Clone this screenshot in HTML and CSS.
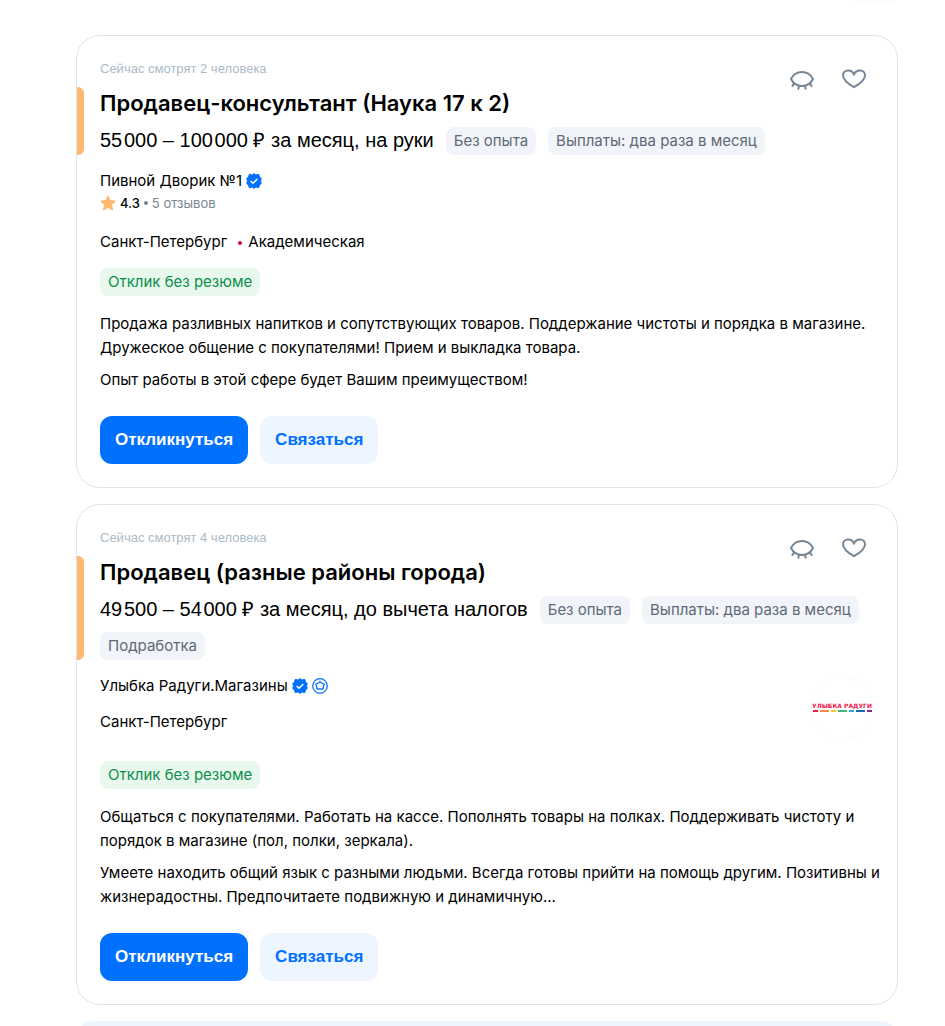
FILE: index.html
```html
<!DOCTYPE html>
<html lang="ru">
<head>
<meta charset="utf-8">
<meta name="viewport" content="width=device-width, initial-scale=1">
<title>Вакансии</title>
<link rel="stylesheet" href="styles.css">
</head>
<body>
<svg class="sprite" aria-hidden="true">
  <symbol id="eye" viewBox="0 0 24 24">
    <path d="M1 12C3.300 7.400 7.300 5 12 5s8.700 2.400 11 7c-2.300 4.600-6.300 7-11 7S3.300 16.600 1 12Z M4 16.500 2 19.700 M9 18.800 8.200 22.500 M15 18.800l.8 3.700 M20 16.500l2 3.200"/>
  </symbol>
  <symbol id="heart" viewBox="0 0 24 24">
    <path d="M12 20.200C6 16.600 1 12.800 1 8.400 1 5.300 3.300 3.500 6 3.500c2.800 0 5.200 1.600 6 4.300.8-2.700 3.200-4.300 6-4.300 2.700 0 5 1.800 5 4.900 0 4.400-5 8.200-11 11.800Z"/>
  </symbol>
  <symbol id="verified" viewBox="0 0 16 16">
    <path fill="#0070ff" stroke="#0070ff" stroke-width="1" stroke-linejoin="round" d="m8 .6 1.900 1.500 2.800-.8.800 2.700 1.800 1.600L14.500 8l.8 2.400-1.800 1.600-.8 2.700-2.800-.8L8 15.400l-1.900-1.500-2.800.8-.8-2.700-1.800-1.600L1.500 8 .7 5.600 2.500 4l.8-2.700 2.800.8Z"/>
    <path fill="none" stroke="#fff" stroke-width="1.500" d="m4.600 8 2.400 2.300 4.300-4.300"/>
  </symbol>
  <symbol id="badge" viewBox="0 0 16 16">
    <g fill="none" stroke="#0070ff"><circle cx="8" cy="8" r="7.300" stroke-width="1.200"/><path stroke-width="1.300" stroke-linejoin="round" d="m8 3.800 1.500 1.300 2.700.9-.8 2.300-.5 2.900-2.900-.3-2.900.3-.5-2.900L3.800 6l2.700-.9Z"/></g>
  </symbol>
  <symbol id="star" viewBox="0 0 16 16">
    <path fill="#ffb870" stroke="#ffb870" stroke-linejoin="round" d="m8 .8 2.100 4.700 5.300.6-3.900 3.600 1.100 5.300L8 12.400 3.400 15l1.100-5.300L.6 6.100l5.300-.6Z"/>
  </symbol>
</svg>
<main class="page">
  <div class="previous"></div>

  <article class="card">
    <header class="head">
      <p class="watching">Сейчас смотрят 2 человека</p>
      <h2 class="title">Продавец-консультант (Наука 17 к 2)</h2>
      <div class="actions">
        <button class="icon-button" aria-label="Скрыть"><svg><use href="#eye"/></svg></button>
        <button class="icon-button" aria-label="В избранное"><svg><use href="#heart"/></svg></button>
      </div>
      <div class="pay">
        <span class="salary">55&#8202;000 – 100&#8202;000 ₽ за месяц, на руки</span>
        <span class="tag">Без опыта</span>
        <span class="tag">Выплаты: два раза в месяц</span>
      </div>
    </header>
    <div class="meta">
      <div class="company"><a href="#">Пивной Дворик №1</a><svg class="mark"><use href="#verified"/></svg></div>
      <div class="rating"><svg class="mark"><use href="#star"/></svg><b>4.3</b><i class="dot"></i><a href="#">5 отзывов</a></div>
      <div class="place rated"><span>Санкт-Петербург</span><i class="dot metro"></i><span>Академическая</span></div>
    </div>
    <span class="tag green">Отклик без резюме</span>
    <div class="text">
      <p>Продажа разливных напитков и сопутствующих товаров. Поддержание чистоты и порядка в магазине. Дружеское общение с покупателями! Прием и выкладка товара.</p>
      <p>Опыт работы в этой сфере будет Вашим преимуществом!</p>
    </div>
    <div class="buttons"><button class="button primary">Откликнуться</button><button class="button">Связаться</button></div>
  </article>

  <article class="card">
    <header class="head">
      <p class="watching">Сейчас смотрят 4 человека</p>
      <h2 class="title">Продавец (разные районы города)</h2>
      <div class="actions">
        <button class="icon-button" aria-label="Скрыть"><svg><use href="#eye"/></svg></button>
        <button class="icon-button" aria-label="В избранное"><svg><use href="#heart"/></svg></button>
      </div>
      <div class="pay">
        <span class="salary">49&#8202;500 – 54&#8202;000 ₽ за месяц, до вычета налогов</span>
        <span class="tag">Без опыта</span>
        <span class="tag">Выплаты: два раза в месяц</span>
        <span class="tag">Подработка</span>
      </div>
    </header>
    <div class="employer">
      <div class="meta">
        <div class="company"><a href="#">Улыбка Радуги.Магазины</a><svg class="mark"><use href="#verified"/></svg><svg class="mark"><use href="#badge"/></svg></div>
        <div class="place">Санкт-Петербург</div>
      </div>
      <a class="logo" href="#" aria-label="Улыбка Радуги"><svg viewBox="0 0 64 64">
        <circle cx="32" cy="32" r="31.500" fill="#fff" stroke="#fafafb"/>
        <text class="logo-text" x="32" y="32" text-anchor="middle">УЛЫБКА РАДУГИ</text>
        <g stroke-width="2"><path stroke="#ed174c" d="M3 35h5"/><path stroke="#f58a4b" d="M10 35h9"/><path stroke="#fdc62f" d="M21 35h5"/><path stroke="#42b977" d="M28 35h9"/><path stroke="#35a7df" d="M39 35h5"/><path stroke="#1769b5" d="M46 35h9"/><path stroke="#7d2b92" d="M57 35h5"/></g>
      </svg></a>
    </div>
    <span class="tag green">Отклик без резюме</span>
    <div class="text">
      <p>Общаться с покупателями. Работать на кассе. Пополнять товары на полках. Поддерживать чистоту и порядок в магазине (пол, полки, зеркала).</p>
      <p>Умеете находить общий язык с разными людьми. Всегда готовы прийти на помощь другим. Позитивны и жизнерадостны. Предпочитаете подвижную и динамичную...</p>
    </div>
    <div class="buttons"><button class="button primary">Откликнуться</button><button class="button">Связаться</button></div>
  </article>

  <div class="next"></div>
</main>
</body>
</html>
```
FILE: styles.css
```css
* { box-sizing: border-box; }
body { margin: 0; background: #fff; color: #000; font: 15px/24px Inter, "Liberation Sans", sans-serif; }
p, h2 { margin: 0; }
a { color: inherit; text-decoration: none; }
button { font: inherit; border: 0; cursor: pointer; }
.sprite { display: none; }
.page { display: flex; flex-direction: column; gap: 16px; min-height: 100vh; padding: 0 47px 0 76px; }
.previous { align-self: flex-end; width: 40px; height: 3px; margin: 0 4px 16px 0; border-radius: 0 0 20px 20px; background: #fafbfd; }
.card { display: flex; flex-direction: column; align-items: flex-start; padding: 23px; border: 1px solid #dce3eb; border-radius: 24px; }
.head { position: relative; display: grid; grid-template-columns: 1fr auto; row-gap: 8px; align-self: stretch; }
.head::before { content: ""; position: absolute; left: -23px; top: 28px; bottom: 0; width: 7px; border-radius: 0 6px 6px 0; background: #ffb870; }
.watching { font: 13px/20px "Liberation Sans", Arial, sans-serif; color: #aabbca; }
.title { grid-column: 1; font-size: 22px; line-height: 32px; font-weight: 600; }
.actions { grid-column: 2; grid-row: 1 / span 2; display: flex; gap: 28px; padding: 8px 8px 0 0; align-items: flex-start; }
.icon-button { display: flex; padding: 0; background: none; }
.icon-button svg { width: 24px; height: 24px; fill: none; stroke: #768694; stroke-width: 2; stroke-linejoin: round; }
.pay { grid-column: 1 / -1; display: flex; flex-wrap: wrap; gap: 8px 12px; }
.salary { font: 20px/26px "Liberation Sans", Arial, sans-serif; }
.tag { padding: 2px 8px; border-radius: 8px; background: #f1f4f9; color: #5e6a76; }
.green { margin-top: 14px; background: #e8f8ec; color: #0b8f4c; }
.meta { margin-top: 14px; }
.company, .rating, .place { display: flex; align-items: center; }
.company { gap: 4px; }
.mark { width: 16px; height: 16px; }
.rating { gap: 4px; font-size: 13px; line-height: 20px; color: #768694; }
.rating b { font-weight: 500; color: #000; }
.dot { width: 4px; height: 4px; border-radius: 50%; background: #768694; }
.place { margin-top: 12px; }
.rated { margin-top: 17px; }
.metro { margin: 2px 6px 0 11px; background: #d6083b; }
.employer { display: flex; justify-content: space-between; align-self: stretch; }
.logo { width: 64px; height: 64px; margin: 16px 0 7px; }
.logo svg { display: block; }
.logo-text { font: 900 6px "DejaVu Sans", sans-serif; fill: #ed174c; }
.text { display: flex; flex-direction: column; gap: 8px; margin: 16px -12px 24px 0; }
.buttons { display: flex; gap: 12px; }
.button { height: 48px; padding: 0 15px; border-radius: 12px; background: #edf5ff; color: #0070ff; font: 700 17px/24px "Liberation Sans", Arial, sans-serif; }
.primary { background: #0070ff; color: #fff; }
.next { flex: 1; min-height: 5px; margin: 0 6px; border-radius: 14px 14px 0 0 / 5px 5px 0 0; background: #edf5ff; }
```
